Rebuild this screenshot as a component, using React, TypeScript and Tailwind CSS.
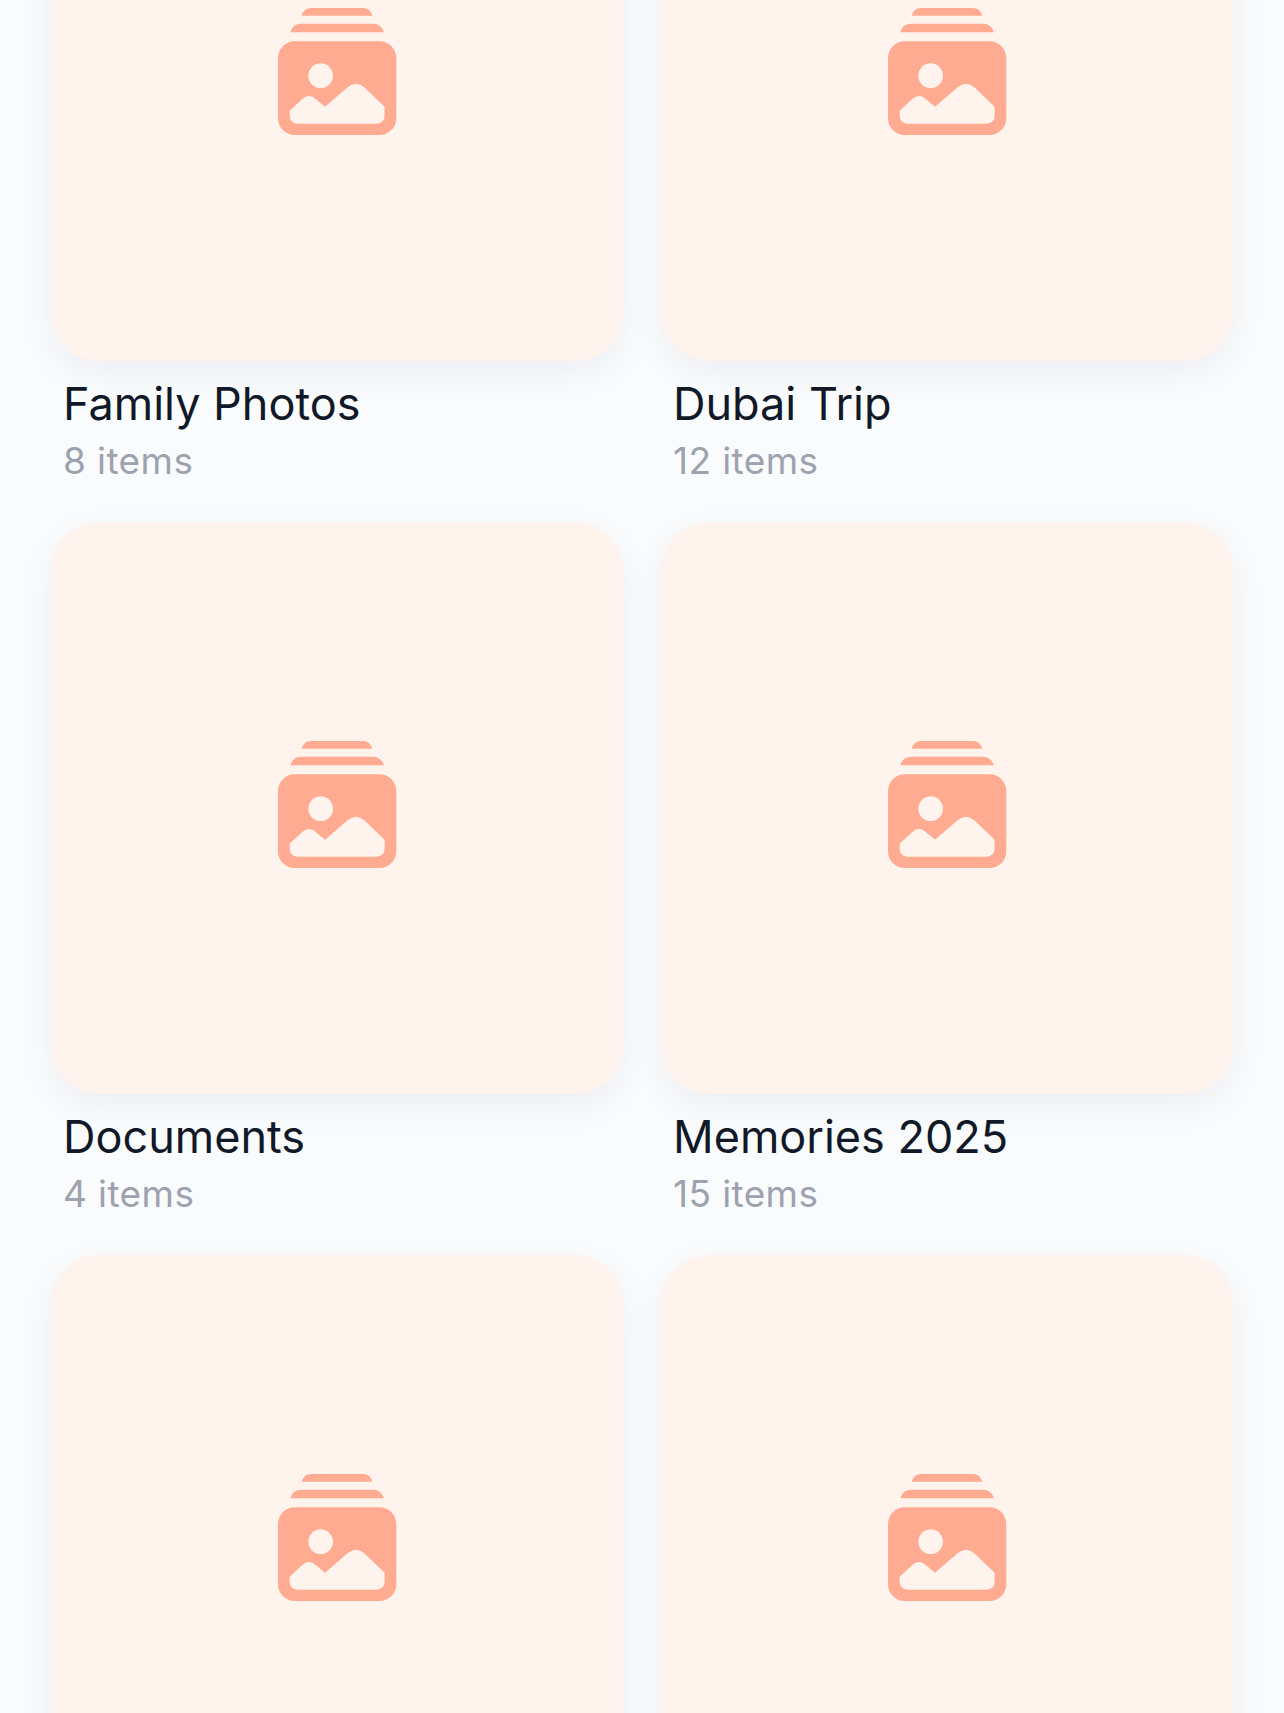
const albums = [
  { name: "Travel 2024", count: "8 items" },
  { name: "Work", count: "12 items" },
  { name: "Family Photos", count: "8 items" },
  { name: "Dubai Trip", count: "12 items" },
  { name: "Documents", count: "4 items" },
  { name: "Memories 2025", count: "15 items" },
  { name: "Receipts", count: "6 items" },
  { name: "Screenshots", count: "9 items" },
];

function AlbumIcon() {
  return (
    <svg width="118.3" height="127" viewBox="53 24 355 381" aria-hidden="true">
      <path d="M124 47C128 33 138 24 152 24H308C322 24 332 33 336 47Z" fill="#ffab91" />
      <path d="M90 97C94 81 106 71 122 71H338C354 71 366 81 371 97Z" fill="#ffab91" />
      <rect x="53" y="124" width="355" height="281" rx="50" fill="#ffab91" />
      <circle cx="181" cy="227" r="37" fill="#fff3ed" />
      <path
        d="M88 332L125 298Q146 278 167 298L194 320L262 262Q287 240 312 262L373 320V346Q373 371 348 371H112Q88 371 88 346Z"
        fill="#fff3ed"
      />
    </svg>
  );
}

export default function App() {
  return (
    <div className="h-[1713px] w-full overflow-hidden bg-[#fafbfd] font-['Inter',sans-serif]">
      <div className="mt-[-944px] grid grid-cols-2 gap-x-[38px] gap-y-[39px] px-[51px]">
        {albums.map((a) => (
          <div key={a.name}>
            <div className="flex h-[572px] items-center justify-center rounded-[48px] bg-[#fff3ed] pb-[7px] pl-[1px] shadow-[0_12px_36px_rgba(17,24,39,0.05)]">
              <AlbumIcon />
            </div>
            <div className="px-3 pt-[16px]">
              <div className="text-[45px] leading-[54px] text-[#111827]">{a.name}</div>
              <div className="mt-[8px] text-[37px] leading-[44px] tracking-[0.4px] text-[#9ca3af]">{a.count}</div>
            </div>
          </div>
        ))}
      </div>
    </div>
  );
}
